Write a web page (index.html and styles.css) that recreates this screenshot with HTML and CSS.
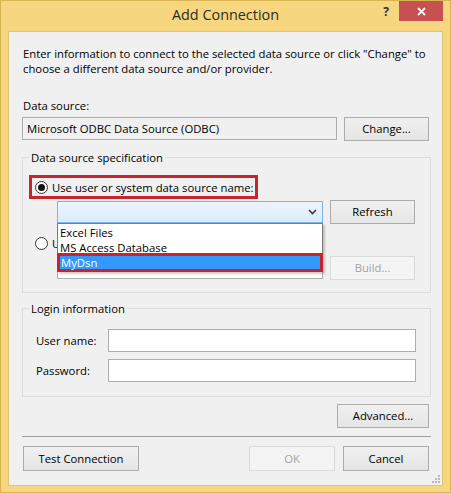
FILE: index.html
```html
<!DOCTYPE html>
<html lang="en">
<head>
<meta charset="utf-8">
<title>Add Connection</title>
<link rel="stylesheet" href="styles.css">
</head>
<body>
<div class="window">
  <div class="titlebar">
    <div class="title">Add Connection</div>
    <div class="caption">
      <span class="help">?</span>
      <span class="close">
        <svg width="9" height="9" viewBox="0 0 9 9"><path d="M1 1 L8 8 M8 1 L1 8" stroke="#fff" stroke-width="1.8" fill="none"/></svg>
      </span>
    </div>
  </div>

  <div class="client">
    <p class="intro">Enter information to connect to the selected data source or click "Change" to<br>choose a different data source and/or provider.</p>

    <div class="caption-label">Data source:</div>
    <div class="ds-row">
      <div class="textbox readonly">Microsoft ODBC Data Source (ODBC)</div>
      <button class="btn w85">Change...</button>
    </div>

    <fieldset class="group spec">
      <legend>Data source specification</legend>
      <div class="opt hl">
        <span class="radio checked"></span>
        <span>Use user or system data source name:</span>
      </div>
      <div class="ctl-row first">
        <div class="combo-wrap">
          <div class="combo">
            <svg class="chev" width="9" height="6" viewBox="0 0 9 6"><path d="M1 1 L4.5 4.5 L8 1" stroke="#3c3c3c" stroke-width="1.6" fill="none"/></svg>
          </div>
          <ul class="droplist">
            <li>Excel Files</li>
            <li class="mid">MS Access Database</li>
            <li class="selected">MyDsn</li>
          </ul>
        </div>
        <button class="btn w85">Refresh</button>
      </div>
      <div class="opt">
        <span class="radio"></span>
        <span>Use connection string:</span>
      </div>
      <div class="ctl-row">
        <div class="textbox conn"></div>
        <button class="btn w85 tall" disabled>Build...</button>
      </div>
    </fieldset>

    <fieldset class="group login">
      <legend>Login information</legend>
      <div class="field">
        <label>User name:</label>
        <div class="textbox input"></div>
      </div>
      <div class="field">
        <label>Password:</label>
        <div class="textbox input"></div>
      </div>
    </fieldset>

    <button class="btn advanced">Advanced...</button>
    <div class="separator"></div>

    <div class="footer">
      <button class="btn test">Test Connection</button>
      <div class="spacer"></div>
      <button class="btn w86" disabled>OK</button>
      <button class="btn w86">Cancel</button>
    </div>

    <svg class="grip" width="9" height="9" viewBox="0 0 9 9">
      <g fill="#b8b8b8">
        <rect x="7" y="1" width="2" height="2"/>
        <rect x="4" y="4" width="2" height="2"/>
        <rect x="7" y="4" width="2" height="2"/>
        <rect x="1" y="7" width="2" height="2"/>
        <rect x="4" y="7" width="2" height="2"/>
        <rect x="7" y="7" width="2" height="2"/>
      </g>
    </svg>
  </div>
</div>
</body>
</html>
```
FILE: styles.css
```css
* { box-sizing: border-box; }

html, body {
  margin: 0;
  padding: 0;
}

body {
  width: 451px;
  height: 493px;
  overflow: hidden;
  font-family: "Open Sans", "Noto Sans", sans-serif;
  font-size: 11.3px;
  line-height: 15px;
  color: #000;
  background: #f5d67f;
}

/* window frame */
.window {
  width: 451px;
  height: 493px;
  border: 1px solid #d8b452;
  background: #f6d77f;
  display: flex;
  flex-direction: column;
}

.titlebar {
  height: 30px;
  flex: none;
  display: grid;
  grid-template-columns: 1fr auto 1fr;
}

.title {
  grid-column: 2;
  font-size: 14.4px;
  line-height: 28px;
  color: #2a2a2a;
}

.caption {
  grid-column: 3;
  justify-self: end;
  display: flex;
  align-items: flex-start;
  margin-right: 7px;
}

.help {
  width: 28px;
  height: 20px;
  padding-left: 2px;
  text-align: center;
  font-weight: bold;
  font-size: 12px;
  line-height: 21px;
  color: #333;
}

.close {
  width: 44px;
  height: 20px;
  background: #c75050;
  display: flex;
  align-items: center;
  justify-content: center;
}

/* dialog body */
.client {
  position: relative;
  flex: none;
  height: 455px;
  margin: 0 7px;
  border: 1px solid #dcc479;
  background: #f0f0f0;
  padding: 0 11px 0 13px;
  display: flex;
  flex-direction: column;
}

.intro {
  margin: 14px 0 0;
  padding-left: 1px;
}

.caption-label {
  margin-top: 22px;
  padding-left: 1px;
}

.ds-row {
  display: flex;
  align-items: flex-start;
  margin-top: 4px;
  gap: 7px;
}

.textbox {
  border: 1px solid #abadb3;
  background: #fff;
}

.textbox.readonly {
  width: 315px;
  height: 23px;
  background: #f0f0f0;
  line-height: 21px;
  padding-left: 4px;
}

.btn {
  font: inherit;
  color: #000;
  height: 24px;
  padding: 0;
  border: 1px solid #acacac;
  background: linear-gradient(#f0f0f0, #e5e5e5);
  line-height: 20px;
}

.btn:disabled {
  color: #a3a3a3;
  border-color: #d9d9d9;
  background: #f4f4f4;
}

.w85 { width: 85px; }
.w86 { width: 86px; }

/* group boxes */
.group {
  margin: 9px 0 0;
  padding: 0 0 12px;
  border: 1px solid #dcdcdc;
  min-width: 0;
}

.group legend {
  margin-left: 6px;
  padding: 0 2px;
  line-height: 15px;
}

.opt {
  display: flex;
  align-items: center;
  gap: 4px;
  height: 18px;
  margin: 10px 0 0 12px;
}

.opt.hl {
  width: 229px;
  height: 24px;
  margin-left: 6px;
  border: 3px solid #c8242e;
  padding-left: 3px;
}

.radio {
  width: 13px;
  height: 13px;
  flex: none;
  border: 1px solid #333;
  border-radius: 50%;
  background: #fff;
  display: flex;
  align-items: center;
  justify-content: center;
}

.radio.checked::after {
  content: "";
  width: 7px;
  height: 7px;
  border-radius: 50%;
  background: #111;
}

.ctl-row {
  display: flex;
  align-items: flex-start;
  gap: 7px;
  margin: 4px 0 0 34px;
}

.ctl-row.first {
  margin-top: 1px;
}

.combo-wrap {
  position: relative;
  width: 266px;
  margin-top: 1px;
}

.combo {
  height: 22px;
  border: 1px solid #7eb4ea;
  background: linear-gradient(#ecf4fc, #dcecfc);
  display: flex;
  align-items: center;
  justify-content: flex-end;
  padding-right: 5px;
}

/* open drop-down list, drawn over the controls below */
.droplist {
  position: absolute;
  top: 100%;
  left: 0;
  width: 266px;
  margin: 0;
  padding: 1px 0 0;
  list-style: none;
  background: #fff;
  border: 1px solid #7a7a7a;
  box-shadow: 2px 2px 2px rgba(0, 0, 0, 0.2);
  z-index: 2;
}

.droplist li {
  height: 15px;
  padding-left: 2px;
  line-height: 15px;
  white-space: nowrap;
}

.droplist li.mid {
  height: 13px;
}

.droplist li.selected {
  height: 19px;
  margin: 0 -1px -1px;
  border: 3px solid #c8242e;
  background: #3399ff;
  color: #fff;
  padding-left: 1px;
  line-height: 14px;
}

.textbox.conn {
  width: 266px;
  height: 23px;
}

.btn.tall { height: 24px; }

/* login */
.field {
  display: flex;
  align-items: center;
  margin: 13px 0 0 13px;
}

.field + .field {
  margin-top: 7px;
}

.field label {
  width: 72px;
}

.textbox.input {
  width: 308px;
  height: 23px;
}

.group.login {
  margin-top: 8px;
  padding-bottom: 14px;
}

.advanced {
  align-self: flex-end;
  width: 92px;
  margin: 7px 2px 0 0;
}

.separator {
  height: 1px;
  margin-top: 8px;
  background: #a0a0a0;
}

.footer {
  display: flex;
  gap: 8px;
  margin-top: 9px;
  padding: 0 2px 0 1px;
}

.footer .btn { height: 25px; }

.test { width: 116px; }

.spacer { flex: 1; }

.grip {
  position: absolute;
  right: 2px;
  bottom: 2px;
}
```
